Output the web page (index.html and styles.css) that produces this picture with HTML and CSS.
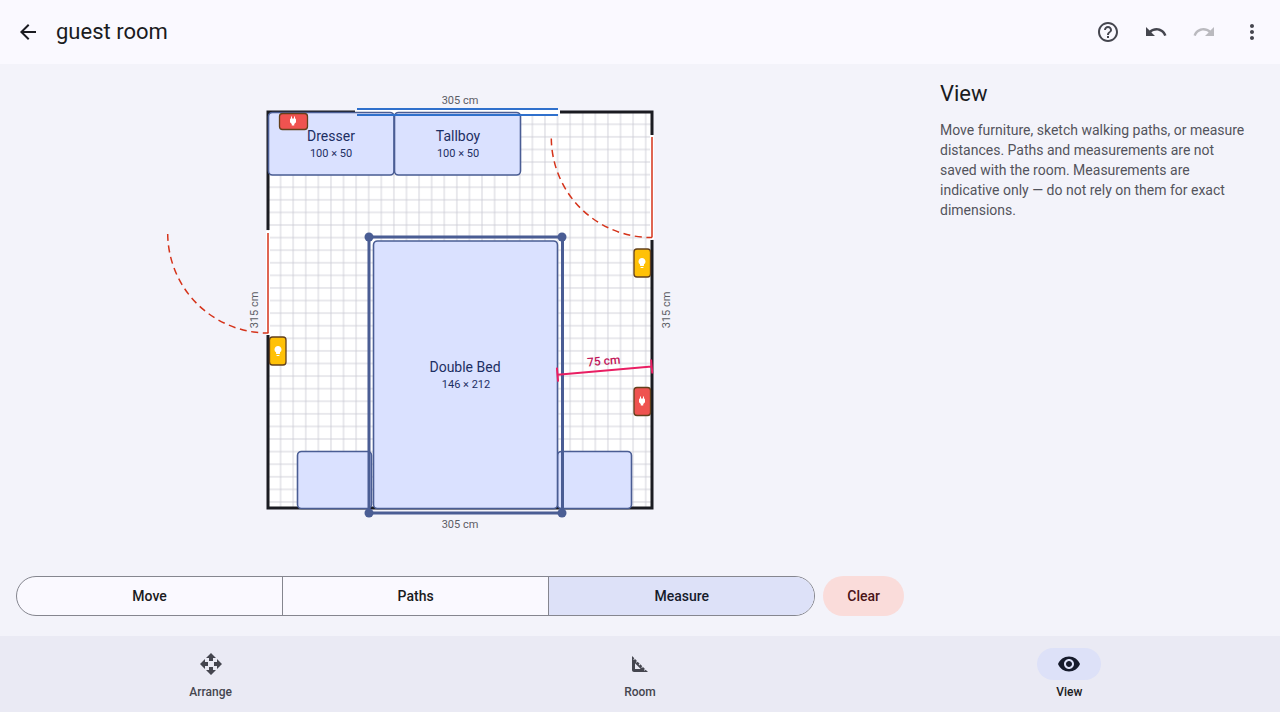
FILE: index.html
```html
<!DOCTYPE html>
<html lang="en">
<head>
    <meta charset="utf-8">
    <meta name="viewport" content="width=device-width, initial-scale=1">
    <title>guest room</title>
    <link rel="stylesheet" href="styles.css">
</head>
<body>
    <header class="app-bar">
        <button class="icon-btn back" aria-label="Back">
            <svg viewBox="0 0 24 24"><path d="M20 11H7.83l5.59-5.59L12 4l-8 8 8 8 1.41-1.41L7.83 13H20v-2z"/></svg>
        </button>
        <h1>guest room</h1>
        <button class="icon-btn" aria-label="Help">
            <svg viewBox="0 0 24 24"><path d="M11 18h2v-2h-2v2zm1-16C6.48 2 2 6.48 2 12s4.48 10 10 10 10-4.48 10-10S17.52 2 12 2zm0 18c-4.41 0-8-3.59-8-8s3.59-8 8-8 8 3.59 8 8-3.59 8-8 8zm0-14c-2.21 0-4 1.79-4 4h2c0-1.1.9-2 2-2s2 .9 2 2c0 2-3 1.75-3 5h2c0-2.25 3-2.5 3-5 0-2.21-1.79-4-4-4z"/></svg>
        </button>
        <button class="icon-btn" aria-label="Undo">
            <svg viewBox="0 0 24 24"><path d="M12.5 8c-2.65 0-5.05.99-6.9 2.6L2 7v9h9l-3.62-3.62c1.39-1.16 3.16-1.88 5.12-1.88 3.54 0 6.55 2.31 7.6 5.5l2.37-.78C21.08 11.03 17.15 8 12.5 8z"/></svg>
        </button>
        <button class="icon-btn" aria-label="Redo" disabled>
            <svg viewBox="0 0 24 24"><path d="M18.4 10.6C16.55 8.99 14.15 8 11.5 8c-4.65 0-8.58 3.03-9.96 7.22L3.9 16c1.05-3.19 4.05-5.5 7.6-5.5 1.95 0 3.73.72 5.12 1.88L13 16h9V7l-3.6 3.6z"/></svg>
        </button>
        <button class="icon-btn" aria-label="More options">
            <svg viewBox="0 0 24 24"><path d="M12 8c1.1 0 2-.9 2-2s-.9-2-2-2-2 .9-2 2 .9 2 2 2zm0 2c-1.1 0-2 .9-2 2s.9 2 2 2 2-.9 2-2-.9-2-2-2zm0 6c-1.1 0-2 .9-2 2s.9 2 2 2 2-.9 2-2-.9-2-2-2z"/></svg>
        </button>
    </header>

    <main>
        <section class="editor">
            <svg class="plan" viewBox="0 64 920 496" role="group" aria-label="Floor plan">
                <defs>
                    <pattern id="grid" x="268" y="111.7" width="12.59" height="12.59" patternUnits="userSpaceOnUse">
                        <path class="grid-line" d="M0 0V12.59M12.59 0V12.59M0 0H12.59M0 12.59H12.59"/>
                    </pattern>
                    <symbol id="plug" viewBox="0 0 24 24"><path d="M16.01 7L16 3h-2v4h-4V3H8v4h-.01C7 6.99 6 7.99 6 8.99v5.49L9.5 18v3h5v-3l3.5-3.51v-5.5c0-1-1-2-1.99-1.99z"/></symbol>
                    <symbol id="bulb" viewBox="0 0 24 24"><path d="M9 21c0 .55.45 1 1 1h4c.55 0 1-.45 1-1v-1H9v1zm3-19C8.14 2 5 5.14 5 9c0 2.38 1.19 4.47 3 5.74V17c0 .55.45 1 1 1h6c.55 0 1-.45 1-1v-2.26c1.81-1.27 3-3.36 3-5.74 0-3.86-3.14-7-7-7z"/></symbol>
                </defs>

                <!-- room -->
                <rect class="floor" x="268" y="112" width="384" height="396"/>
                <rect x="268" y="112" width="384" height="396" fill="url(#grid)"/>
                <path class="wall" d="M355 112H268V230M268 335V508H652V240M652 135V112H560"/>
                <path class="opening" d="M355 112H560M268 231V335M652 135V239"/>

                <!-- furniture -->
                <rect class="item" x="268.5" y="112.5" width="125.5" height="62.5" rx="4"/>
                <rect class="item" x="394.5" y="112.5" width="126" height="62.5" rx="4"/>
                <rect class="item" x="297.5" y="451.5" width="74" height="57" rx="4"/>
                <rect class="item" x="557.5" y="451.5" width="74" height="57" rx="4"/>
                <rect class="item" x="373.5" y="241" width="184" height="267.5" rx="4"/>
                <text class="item-name" x="331" y="141">Dresser</text>
                <text class="item-size" x="331" y="157">100 × 50</text>
                <text class="item-name" x="458" y="141">Tallboy</text>
                <text class="item-size" x="458" y="157">100 × 50</text>
                <text class="item-name" x="465" y="372">Double Bed</text>
                <text class="item-size" x="466" y="388">146 × 212</text>

                <!-- window and doors -->
                <path class="window" d="M357 109H558M357 115H558"/>
                <path class="door" d="M268 233V333M652 137V237.5"/>
                <path class="swing" d="M167.7 234A100 100 0 0 0 268.5 333M551.3 138.5A100 100 0 0 0 652 237.5"/>

                <!-- outlets and lights -->
                <rect class="outlet" x="279.5" y="113.5" width="28" height="16" rx="3"/>
                <use class="glyph" href="#plug" x="287" y="115" width="12" height="12"/>
                <rect class="light" x="634" y="249" width="16.5" height="28" rx="3"/>
                <use class="glyph" href="#bulb" x="636" y="257" width="12" height="12"/>
                <rect class="outlet" x="634" y="387.5" width="16.5" height="28" rx="3"/>
                <use class="glyph" href="#plug" x="636" y="395" width="12" height="12"/>
                <rect class="light" x="269.5" y="337" width="16.5" height="28" rx="3"/>
                <use class="glyph" href="#bulb" x="272" y="345" width="12" height="12"/>

                <!-- selection -->
                <rect class="selection" x="369" y="237" width="193.5" height="276"/>
                <g class="handle">
                    <circle cx="369" cy="237" r="4.5"/>
                    <circle cx="562" cy="237" r="4.5"/>
                    <circle cx="369" cy="513" r="4.5"/>
                    <circle cx="562" cy="513" r="4.5"/>
                </g>

                <!-- measurement -->
                <path class="measure" d="M557.5 374.7L651.7 366.5M556.9 367.7L558.1 381.7M651.1 359.5L652.3 373.5"/>
                <text class="measure-text" transform="translate(604 365) rotate(-5)">75 cm</text>

                <text class="dim" x="460" y="104">305 cm</text>
                <text class="dim" x="460" y="528">305 cm</text>
                <text class="dim" transform="translate(258 310) rotate(-90)">315 cm</text>
                <text class="dim" transform="translate(670 310) rotate(-90)">315 cm</text>
            </svg>

            <div class="tools">
                <div class="segments" role="group" aria-label="View mode">
                    <button aria-pressed="false">Move</button>
                    <button aria-pressed="false">Paths</button>
                    <button class="selected" aria-pressed="true">Measure</button>
                </div>
                <button class="clear">Clear</button>
            </div>
        </section>

        <aside class="panel">
            <h2>View</h2>
            <p>Move furniture, sketch walking paths, or measure distances. Paths and measurements are not saved with the room. Measurements are indicative only — do not rely on them for exact dimensions.</p>
        </aside>
    </main>

    <nav class="nav-bar">
        <a href="#arrange">
            <span class="pill"><svg viewBox="0 0 24 24"><path d="M10 9h4V6h3l-5-5-5 5h3v3zm-1 1H6V7l-5 5 5 5v-3h3v-4zm14 2l-5-5v3h-3v4h3v3l5-5zm-9 3h-4v3H7l5 5 5-5h-3v-3z"/></svg></span>
            Arrange
        </a>
        <a href="#room">
            <span class="pill"><svg viewBox="0 0 24 24"><path d="M17.66 17.66l-1.06 1.06-.71-.71 1.06-1.06-1.94-1.94-1.06 1.06-.71-.71 1.06-1.06-1.94-1.94-1.06 1.06-.71-.71 1.06-1.06L9.7 9.7l-1.06 1.06-.71-.71 1.06-1.06-1.94-1.94-1.06 1.06-.71-.71 1.06-1.06L4 4v14c0 1.1.9 2 2 2h14l-2.34-2.34zM7 17v-5.76L12.76 17H7z"/></svg></span>
            Room
        </a>
        <a href="#view" class="active" aria-current="page">
            <span class="pill"><svg viewBox="0 0 24 24"><path d="M12 4.5C7 4.5 2.73 7.61 1 12c1.73 4.39 6 7.5 11 7.5s9.27-3.11 11-7.5c-1.73-4.39-6-7.5-11-7.5zM12 17c-2.76 0-5-2.24-5-5s2.24-5 5-5 5 2.24 5 5-2.24 5-5 5zm0-8c-1.66 0-3 1.34-3 3s1.34 3 3 3 3-1.34 3-3-1.34-3-3-3z"/></svg></span>
            View
        </a>
    </nav>
</body>
</html>
```
FILE: styles.css
```css
* {
    box-sizing: border-box;
}
body {
    margin: 0;
    min-height: 100vh;
    display: flex;
    flex-direction: column;
    background: #f3f3fa;
    color: #1a1b21;
    font-family: Roboto, sans-serif;
    font-size: 14px;
}
button {
    border: none;
    background: none;
    padding: 0;
    color: inherit;
    font: inherit;
    cursor: pointer;
}
h1, h2 {
    margin: 0;
    font-size: 22px;
    line-height: 28px;
    font-weight: 400;
}

/* top bar */
.app-bar {
    display: flex;
    align-items: center;
    height: 64px;
    padding: 0 4px;
    background: #faf9ff;
}
.app-bar h1 {
    flex: 1;
    padding-left: 4px;
}
.icon-btn {
    display: flex;
    align-items: center;
    justify-content: center;
    width: 48px;
    height: 48px;
    border-radius: 24px;
    color: #45464f;
}
.icon-btn.back {
    color: #1a1b21;
}
.icon-btn:disabled {
    color: #bababf;
    cursor: default;
}
.icon-btn svg, .pill svg {
    width: 24px;
    height: 24px;
    fill: currentColor;
}

main {
    flex: 1;
    display: flex;
}
.editor {
    flex: 1;
    display: flex;
    flex-direction: column;
}

/* floor plan */
.plan {
    flex: 1;
    display: block;
    width: 100%;
    min-height: 0;
}
.plan text {
    text-anchor: middle;
}
.floor {
    fill: #fff;
}
.grid-line {
    stroke: #c9c9d2;
    stroke-width: 0.8;
}
.wall {
    fill: none;
    stroke: #1a1b21;
    stroke-width: 3;
}
.opening {
    fill: none;
    stroke: #fff;
    stroke-width: 4;
}
.item {
    fill: #dae1ff;
    stroke: #4a5d94;
    stroke-width: 1.6;
}
.item-name {
    fill: #1d2f63;
    font-size: 14px;
}
.item-size {
    fill: #1d2f63;
    font-size: 11px;
}
.window {
    stroke: #2f70cc;
    stroke-width: 2;
}
.door {
    stroke: #d5331a;
    stroke-width: 1.5;
}
.swing {
    fill: none;
    stroke: #d5331a;
    stroke-width: 1.5;
    stroke-dasharray: 7 4.6;
}
.outlet, .light {
    fill: #ef5350;
    stroke: #63401c;
    stroke-width: 1.3;
}
.light {
    fill: #ffc107;
}
.glyph {
    fill: #fff;
}
.selection {
    fill: none;
    stroke: #4a5d94;
    stroke-width: 3;
}
.handle {
    fill: #4a5d94;
}
.measure {
    stroke: #e91e63;
    stroke-width: 2;
}
.measure-text {
    fill: #c2185b;
    font-size: 12px;
    font-weight: 500;
}
.dim {
    fill: #5b5c64;
    font-size: 11px;
}

/* tool row */
.tools {
    display: flex;
    gap: 8px;
    padding: 16px 16px 20px;
}
.segments {
    flex: 1;
    display: flex;
    height: 40px;
    border: 1px solid #85868f;
    border-radius: 20px;
    overflow: hidden;
    background: #faf9ff;
}
.segments button {
    flex: 1;
    font-weight: 500;
}
.segments button + button {
    border-left: 1px solid #85868f;
}
.segments .selected {
    background: #dde1f8;
    color: #161b2c;
}
.clear {
    height: 40px;
    padding: 0 24px;
    border-radius: 20px;
    background: #fadcda;
    color: #4a1417;
    font-weight: 500;
}

/* side panel */
.panel {
    width: 360px;
    padding: 16px 20px;
}
.panel p {
    max-width: 308px;
    margin: 12px 0 0;
    color: #53545c;
    line-height: 20px;
}

/* bottom navigation */
.nav-bar {
    display: flex;
    gap: 8px;
    height: 76px;
    padding-top: 12px;
    background: #eaeaf4;
}
.nav-bar a {
    flex: 1;
    display: flex;
    flex-direction: column;
    align-items: center;
    gap: 4px;
    color: #45464f;
    font-size: 12px;
    line-height: 16px;
    font-weight: 500;
    text-decoration: none;
}
.pill {
    display: flex;
    align-items: center;
    justify-content: center;
    width: 64px;
    height: 32px;
    border-radius: 16px;
}
.nav-bar .active {
    color: #1a1b21;
}
.active .pill {
    background: #dde1f8;
    color: #161b2c;
}
```
